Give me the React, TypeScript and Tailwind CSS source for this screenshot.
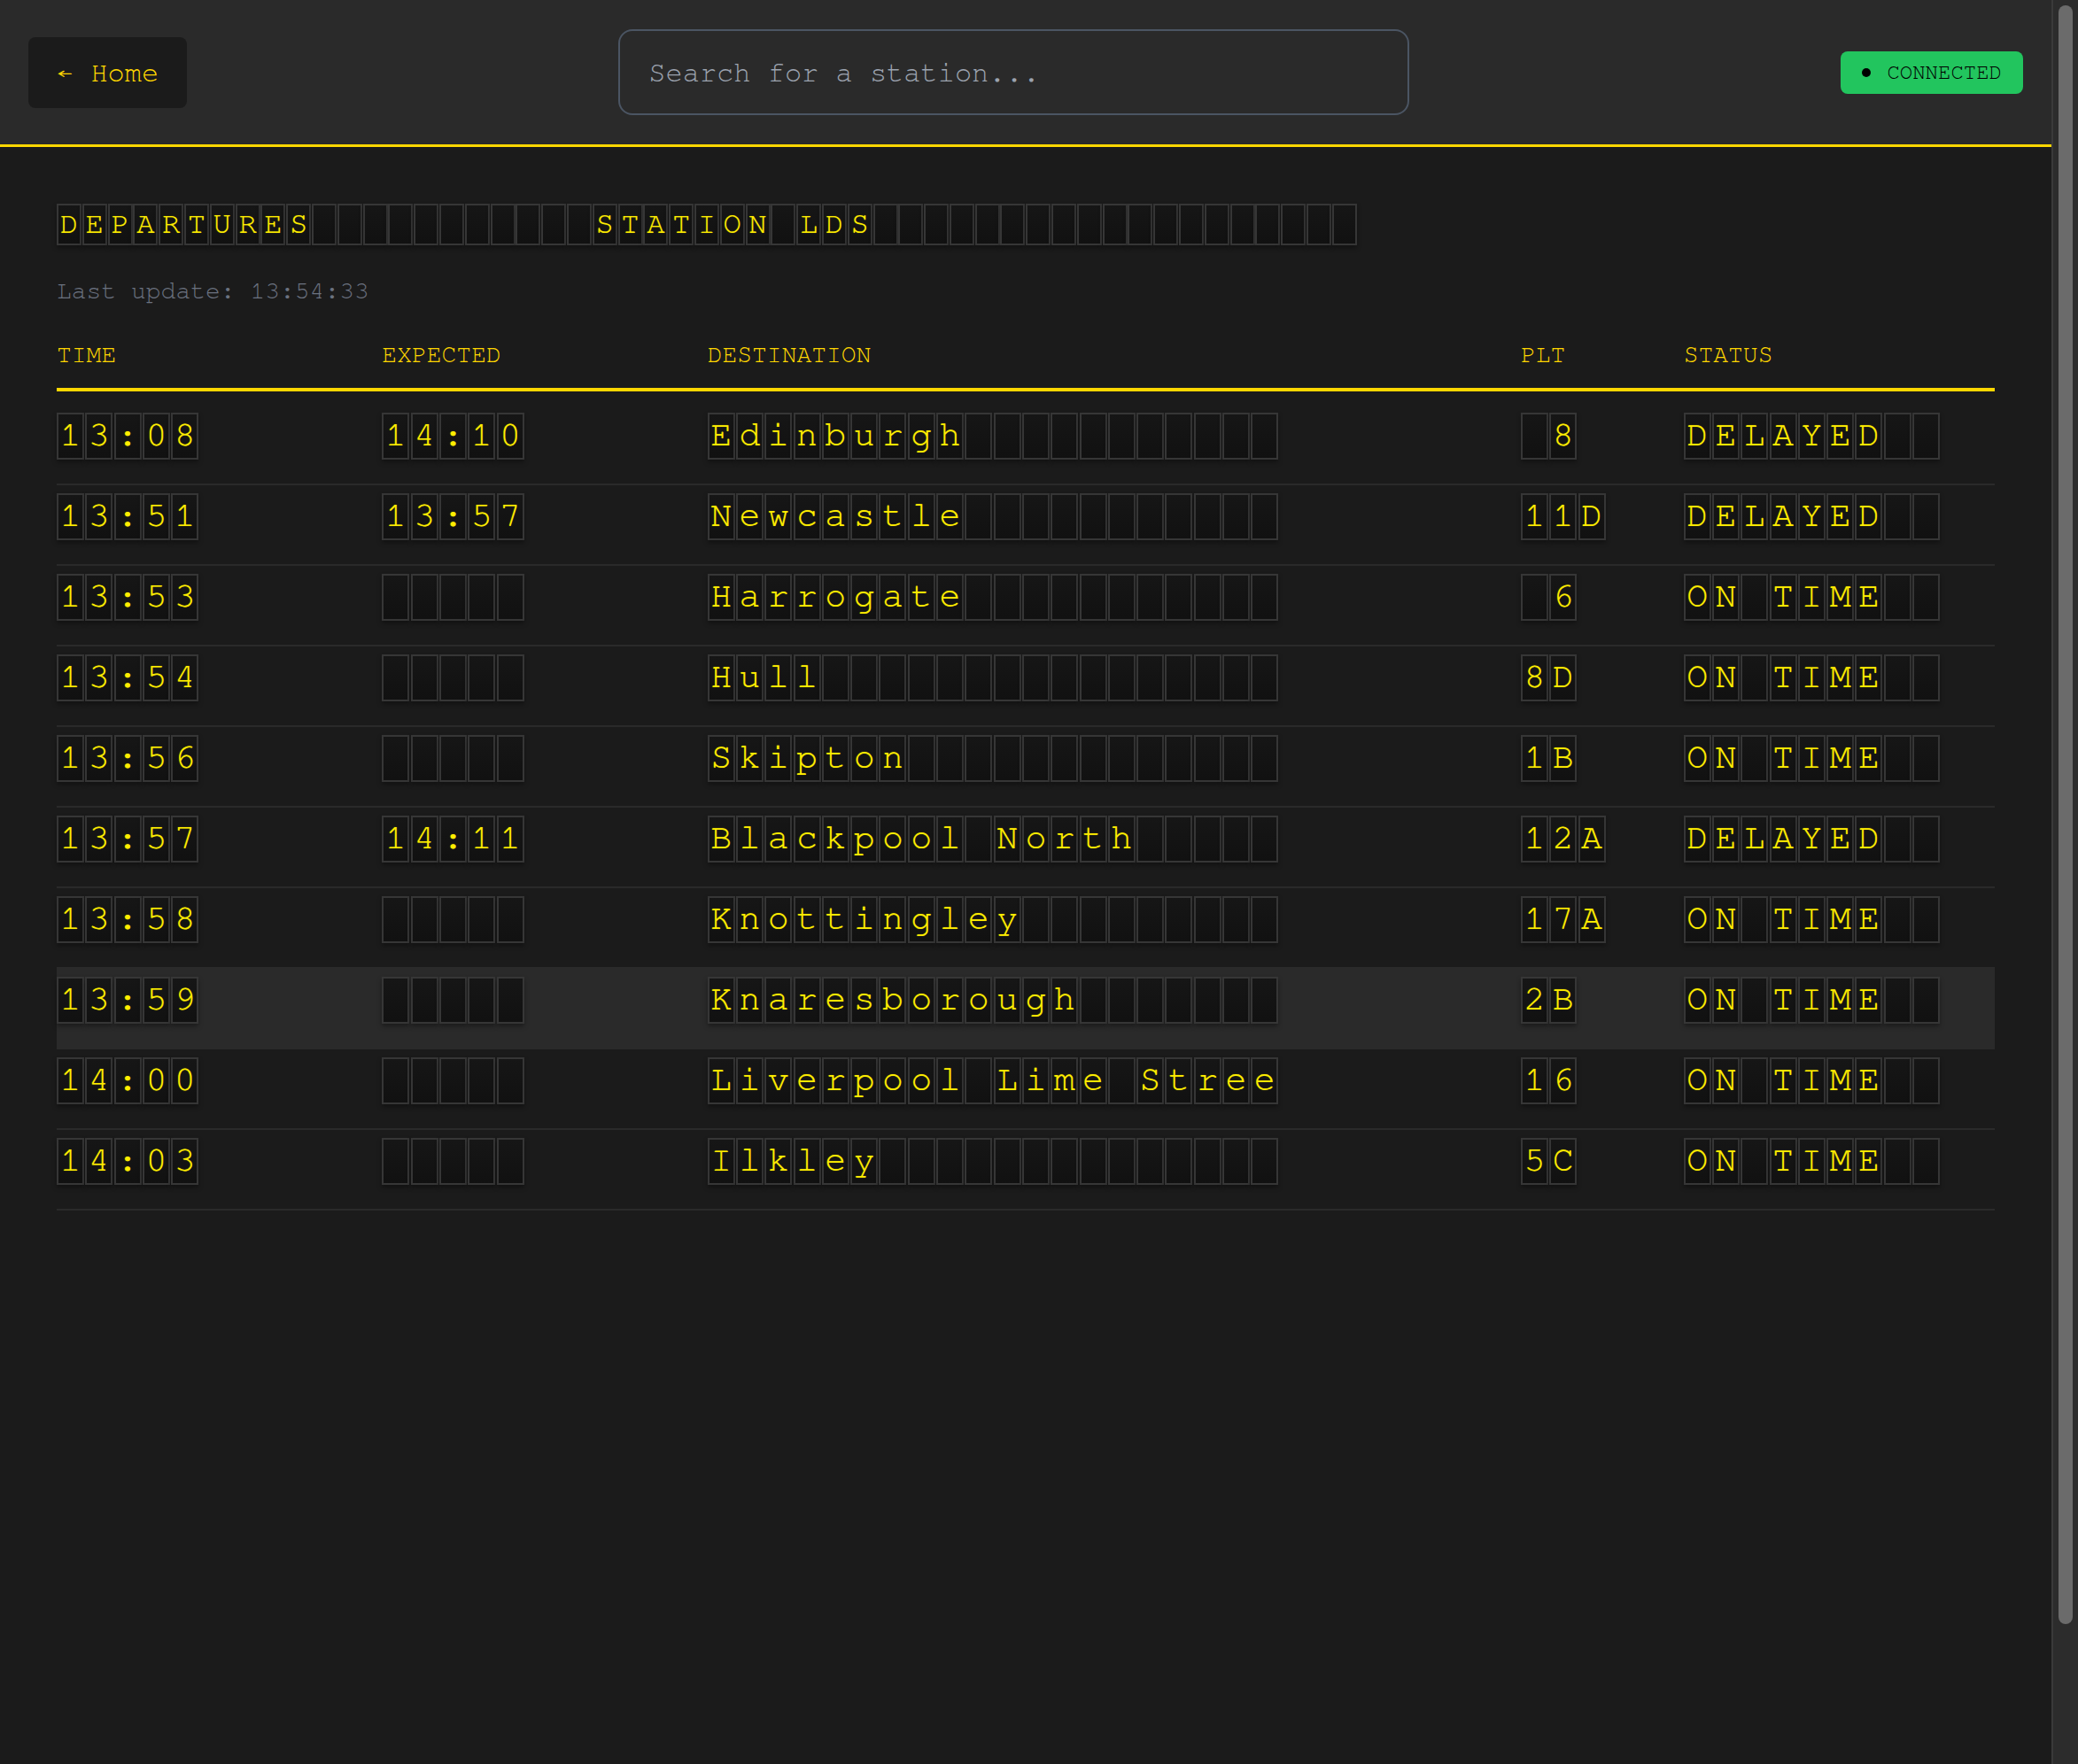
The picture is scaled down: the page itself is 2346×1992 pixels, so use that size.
const TITLE = "DEPARTURES".padEnd(21) + "STATION LDS".padEnd(30);

type Departure = {
  time: string;
  expected: string;
  destination: string;
  platform: string;
  status: string;
};

const departures: Departure[] = [
  { time: "13:08", expected: "14:10", destination: "Edinburgh", platform: "8", status: "DELAYED" },
  { time: "13:51", expected: "13:57", destination: "Newcastle", platform: "11D", status: "DELAYED" },
  { time: "13:53", expected: "", destination: "Harrogate", platform: "6", status: "ON TIME" },
  { time: "13:54", expected: "", destination: "Hull", platform: "8D", status: "ON TIME" },
  { time: "13:56", expected: "", destination: "Skipton", platform: "1B", status: "ON TIME" },
  { time: "13:57", expected: "14:11", destination: "Blackpool North", platform: "12A", status: "DELAYED" },
  { time: "13:58", expected: "", destination: "Knottingley", platform: "17A", status: "ON TIME" },
  { time: "13:59", expected: "", destination: "Knaresborough", platform: "2B", status: "ON TIME" },
  { time: "14:00", expected: "", destination: "Liverpool Lime Street", platform: "16", status: "ON TIME" },
  { time: "14:03", expected: "", destination: "Ilkley", platform: "5C", status: "ON TIME" },
];

// one split-flap board: every character gets its own little tile
function Flap({ text, small }: { text: string; small?: boolean }) {
  return (
    <div className={small ? "flex gap-[0.8px]" : "flex gap-[1.3px]"}>
      {text.split("").map((ch, i) => (
        <span
          key={i}
          className={
            small
              ? "flex h-[47px] w-[28px] items-center justify-center border-2 border-[#363636] bg-gradient-to-b from-[#161616] to-[#111111] pb-[2px] text-[34px] leading-none text-[#ffee00] shadow-[0_3px_5px_rgba(0,0,0,0.35)] [text-shadow:0_0_1px_rgba(255,238,0,0.6)]"
              : "flex h-[53px] w-[31px] items-center justify-center border-2 border-[#363636] bg-gradient-to-b from-[#161616] to-[#111111] pb-[3px] text-[40px] leading-none text-[#ffee00] shadow-[0_3px_5px_rgba(0,0,0,0.35)] [text-shadow:0_0_1px_rgba(255,238,0,0.6)]"
          }
        >
          {ch === " " ? "\u00a0" : ch}
        </span>
      ))}
    </div>
  );
}

export default function App() {
  return (
    <div className="flex min-h-screen bg-[#1b1b1b] font-['Nimbus_Mono_PS','FreeMono','Courier_New','Liberation_Mono',monospace]">
      <div className="min-w-0 flex-1">
        <header className="flex h-[166px] items-center justify-between border-b-[3px] border-[#ffd700] bg-[#2a2a2a] px-8">
          <button className="rounded-[8px] bg-[#1b1b1b] px-8 py-4 text-[32px] leading-[48px] text-[#ffd700]">
            ← Home
          </button>
          <input
            type="text"
            placeholder="Search for a station..."
            className="h-[97px] w-[893px] rounded-[16px] border-2 border-[#4b5563] bg-transparent px-8 text-[32px] text-white outline-none placeholder:text-[#9ca3af]"
          />
          <div className="flex h-[48px] items-center gap-[18px] rounded-[8px] bg-[#22c55e] px-6 text-[24px] text-black">
            <span className="h-[10px] w-[10px] rounded-full bg-black" />
            CONNECTED
          </div>
        </header>

        <main className="h-[1826px] px-16 pt-16">
          <Flap text={TITLE} small />
          <p className="mt-8 text-[28px] leading-[40px] text-[#6b7280]">Last update: 13:54:33</p>

          <div className="mt-8 grid grid-cols-12 gap-x-4 border-b-4 border-[#ffd700] pb-[17px] text-[28px] leading-[40px] text-[#ffd700]">
            <div className="col-span-2">TIME</div>
            <div className="col-span-2">EXPECTED</div>
            <div className="col-span-5">DESTINATION</div>
            <div className="col-span-1">PLT</div>
            <div className="col-span-2">STATUS</div>
          </div>

          <div className="mt-[15px]">
            {departures.map((d, i) => (
              <div
                key={i}
                className={
                  i === 7
                    ? "grid grid-cols-12 gap-x-4 border-b-2 border-[#2a2a2a] bg-[#2a2a2a] pt-[9px] pb-[27px]"
                    : "grid grid-cols-12 gap-x-4 border-b-2 border-[#2a2a2a] pt-[9px] pb-[27px]"
                }
              >
                <div className="col-span-2">
                  <Flap text={d.time} />
                </div>
                <div className="col-span-2">
                  <Flap text={d.expected.padEnd(5)} />
                </div>
                <div className="col-span-5">
                  <Flap text={d.destination.padEnd(20).slice(0, 20)} />
                </div>
                <div className="col-span-1">
                  <Flap text={d.platform.padStart(2)} />
                </div>
                <div className="col-span-2">
                  <Flap text={d.status.padEnd(9)} />
                </div>
              </div>
            ))}
          </div>
        </main>
      </div>

      {/* page scrollbar, as the browser draws it */}
      <div className="w-[30px] shrink-0 border-l-2 border-[#3a3a3a] bg-[#2c2c2c] px-[6px] pt-[6px]">
        <div className="h-[1828px] rounded-full bg-[#6b6b6b]" />
      </div>
    </div>
  );
}
